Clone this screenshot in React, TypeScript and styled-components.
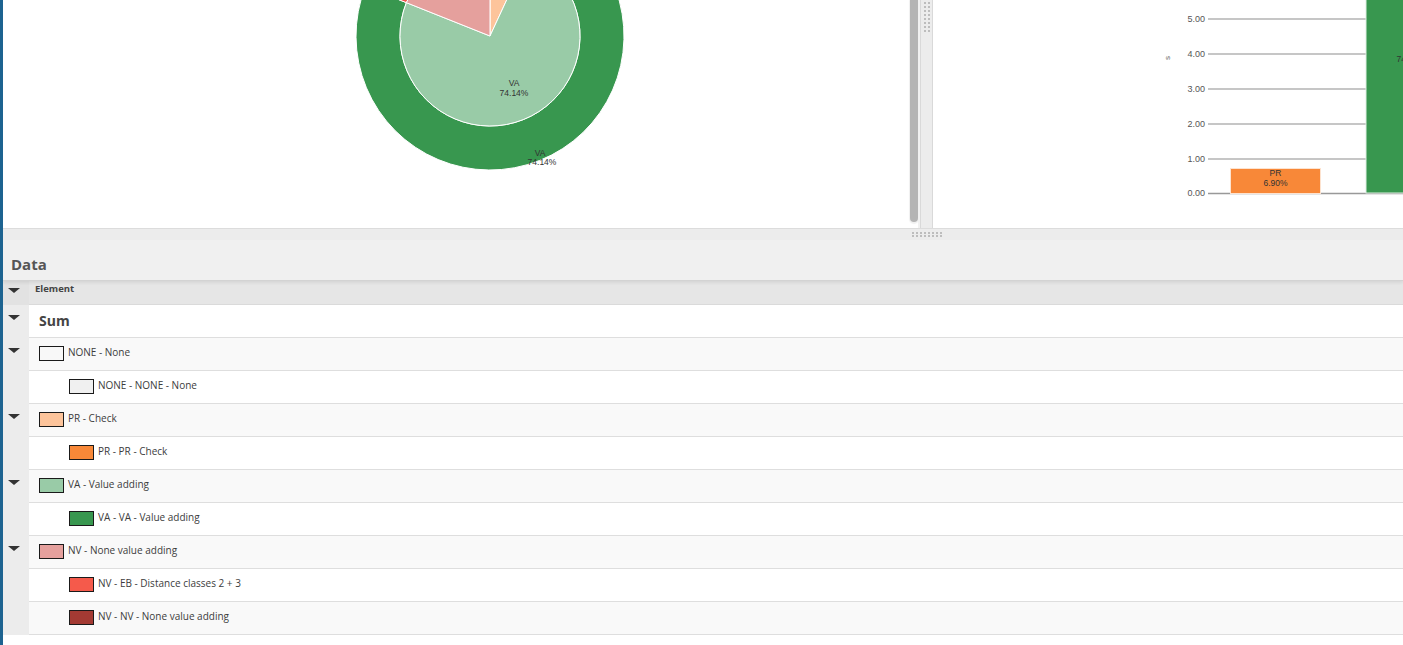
import React from 'react';
import styled, { createGlobalStyle } from 'styled-components';

const GlobalStyle = createGlobalStyle`
  html, body { margin: 0; padding: 0; background: #fff; }
  body { font-family: "Open Sans", "Noto Sans", sans-serif; overflow: hidden; }
  #root { width: 1403px; height: 645px; }
`;

const Page = styled.div`
  width: 1403px;
  height: 645px;
  box-sizing: border-box;
  border-left: 3px solid #1d6390;
  display: flex;
  flex-direction: column;
  overflow: hidden;
  background: #fff;
`;

const TopArea = styled.div`
  height: 229px;
  flex: none;
  display: flex;
  box-sizing: border-box;
  border-bottom: 1px solid #dcdcdc;
`;

const ChartPanel = styled.div<{ $width: number }>`
  width: ${p => p.$width}px;
  flex: none;
  overflow: hidden;
  background: #fff;
  svg { display: block; }
`;

const ScrollTrack = styled.div`
  width: 10px;
  flex: none;
  box-sizing: content-box;
  border-right: 2px solid #f1f1f1;
  padding-bottom: 6px;
  display: flex;
  background: #fff;
`;

const ScrollThumb = styled.div`
  margin-left: 2px;
  width: 8px;
  background: #b4b4b4;
  border-radius: 0 0 4px 4px;
  box-shadow: 0 1px 1px 1px #f0f0f0;
`;

const VSplitter = styled.div`
  width: 11px;
  flex: none;
  background: #ececec;
  border-left: 1px solid #d9d9d9;
  border-right: 1px solid #d9d9d9;
  display: flex;
  justify-content: center;
  padding-top: 2px;
  box-sizing: content-box;
`;

const Grip = styled.div<{ $cols: number; $rows: number; $rowGap: number }>`
  display: grid;
  grid-template-columns: repeat(${p => p.$cols}, 2px);
  grid-template-rows: repeat(${p => p.$rows}, 2px);
  column-gap: 2px;
  row-gap: ${p => p.$rowGap}px;
  span { background: #bdbdbd; }
`;

const HSplitter = styled.div`
  height: 11px;
  flex: none;
  background: #ececec;
  display: flex;
  align-items: center;
  padding-left: 909px;
`;

const SectionHeader = styled.div`
  height: 41px;
  flex: none;
  box-sizing: border-box;
  background: #f0f0f0;
  border-bottom: 1px solid #d3d3d3;
  box-shadow: 0 2px 3px rgba(0, 0, 0, 0.07);
  display: flex;
  align-items: center;
  padding: 8px 0 0 8px;
  position: relative;
  z-index: 1;
`;

const SectionTitle = styled.span`
  font-size: 15px;
  font-weight: 700;
  color: #555;
`;

const Table = styled.div`
  display: flex;
  flex-direction: column;
`;

const HeaderRow = styled.div`
  display: flex;
  height: 24px;
`;

const HeaderToggle = styled.div`
  width: 26px;
  flex: none;
  background: #e2e2e2;
  box-sizing: border-box;
  padding: 7px 0 0 5px;
`;

const HeaderCell = styled.div`
  flex: 1;
  background: #e6e6e6;
  border-bottom: 1px solid #dadada;
  padding: 1px 0 0 6px;
  font-size: 9.5px;
  font-weight: 700;
  color: #444;
`;

const Row = styled.div`
  display: flex;
  height: 33px;
`;

const ToggleCell = styled.div`
  width: 26px;
  flex: none;
  background: #ececec;
  box-sizing: border-box;
  padding: 10px 0 0 5px;
`;

const Caret = styled.div`
  width: 0;
  height: 0;
  border-left: 6px solid transparent;
  border-right: 6px solid transparent;
  border-top: 5px solid #333;
`;

const ContentCell = styled.div<{ $level: number; $striped: boolean }>`
  flex: 1;
  display: flex;
  align-items: center;
  box-sizing: border-box;
  border-bottom: 1px solid #dedede;
  background: ${p => (p.$striped ? '#f9f9f9' : '#fff')};
  padding-left: ${p => (p.$level === 2 ? 40 : 10)}px;
  padding-bottom: ${p => (p.$level === 0 ? 1 : 2)}px;
`;

const Swatch = styled.span<{ $color: string }>`
  width: 25px;
  height: 15px;
  flex: none;
  box-sizing: border-box;
  border: 1px solid #1a1a1a;
  background: ${p => p.$color};
  margin-right: 4px;
`;

const Label = styled.span`
  font-size: 10px;
  color: #3c3c3c;
  white-space: nowrap;
  margin-top: -2px;
`;

const SumLabel = styled.span`
  font-size: 14px;
  font-weight: 700;
  color: #444;
`;

type RowData = { level: 0 | 1 | 2; label: string; color?: string; expandable?: boolean };

const rows: RowData[] = [
  { level: 0, label: 'Sum', expandable: true },
  { level: 1, label: 'NONE - None', color: '#f8f8f8', expandable: true },
  { level: 2, label: 'NONE - NONE - None', color: '#f0f0f0' },
  { level: 1, label: 'PR - Check', color: '#fdc49b', expandable: true },
  { level: 2, label: 'PR - PR - Check', color: '#f88838' },
  { level: 1, label: 'VA - Value adding', color: '#99cba7', expandable: true },
  { level: 2, label: 'VA - VA - Value adding', color: '#38974f' },
  { level: 1, label: 'NV - None value adding', color: '#e5a09d', expandable: true },
  { level: 2, label: 'NV - EB - Distance classes 2 + 3', color: '#f55a4b' },
  { level: 2, label: 'NV - NV - None value adding', color: '#a33a33' },
];

const CX = 487;
const CY = 36;
const R_IN = 90;
const R_OUT = 134;

const pt = (r: number, deg: number) => {
  const a = ((deg - 90) * Math.PI) / 180;
  return `${(CX + r * Math.cos(a)).toFixed(2)} ${(CY + r * Math.sin(a)).toFixed(2)}`;
};

const wedge = (r: number, a0: number, a1: number) => {
  const large = a1 - a0 > 180 ? 1 : 0;
  return `M ${CX} ${CY} L ${pt(r, a0)} A ${r} ${r} 0 ${large} 1 ${pt(r, a1)} Z`;
};

const ring = (r0: number, r1: number, a0: number, a1: number) => {
  const large = a1 - a0 > 180 ? 1 : 0;
  return `M ${pt(r1, a0)} A ${r1} ${r1} 0 ${large} 1 ${pt(r1, a1)} L ${pt(r0, a1)} A ${r0} ${r0} 0 ${large} 0 ${pt(r0, a0)} Z`;
};

const PR_END = 24.84;
const VA_END = 291.74;

const PieChart = () => (
  <svg width={905} height={228} viewBox="0 0 905 228">
    <g stroke="#fff" strokeWidth={1}>
      <path d={ring(R_IN, R_OUT, 0, PR_END)} fill="#f88838" />
      <path d={ring(R_IN, R_OUT, PR_END, VA_END)} fill="#38974f" />
      <path d={ring(R_IN, R_OUT, VA_END, 330)} fill="#f2554a" />
      <path d={ring(R_IN, R_OUT, 330, 360)} fill="#a33a33" />
      <path d={wedge(R_IN, 0, PR_END)} fill="#fdc49b" />
      <path d={wedge(R_IN, PR_END, VA_END)} fill="#99cba7" />
      <path d={wedge(R_IN, VA_END, 360)} fill="#e5a09d" />
    </g>
    <g fontFamily='"Liberation Sans", Arial, sans-serif' fontSize={8.5} fill="#333" textAnchor="middle">
      <text x={511} y={86}>VA</text>
      <text x={511} y={96}>74.14%</text>
      <text x={537} y={156}>VA</text>
      <text x={539} y={165}>74.14%</text>
    </g>
  </svg>
);

const ticks = ['5.00', '4.00', '3.00', '2.00', '1.00'];

const BarChart = () => (
  <svg width={470} height={228} viewBox="0 0 470 228">
    <g fontFamily='"Liberation Sans", Arial, sans-serif' fontSize={9} fill="#555" textAnchor="end">
      {ticks.map((t, i) => (
        <text key={t} x={272} y={22 + i * 35}>{t}</text>
      ))}
      <text x={272} y={196}>0.00</text>
    </g>
    <g stroke="#b3b3b3" strokeWidth={1.6}>
      {ticks.map((t, i) => (
        <line key={t} x1={275} x2={470} y1={19 + i * 35} y2={19 + i * 35} />
      ))}
    </g>
    <line x1={275} x2={470} y1={193.5} y2={193.5} stroke="#999" strokeWidth={1.6} />
    <text
      x={237}
      y={58}
      fontFamily='"Liberation Sans", Arial, sans-serif'
      fontSize={8}
      fill="#666"
      textAnchor="middle"
      transform="rotate(-90 237 58)"
    >
      s
    </text>
    <rect x={297.5} y={168.5} width={90} height={25} fill="#f88838" stroke="#fde3d0" strokeWidth={1} />
    <rect x={433} y={-70} width={92} height={263} fill="#38974f" stroke="#e0efe4" strokeWidth={1} />
    <g fontFamily='"Liberation Sans", Arial, sans-serif' fontSize={8.5} fill="#333" textAnchor="middle">
      <text x={342.5} y={176}>PR</text>
      <text x={342.5} y={185.5}>6.90%</text>
      <text x={478} y={52}>VA</text>
      <text x={478} y={62}>74.14%</text>
    </g>
  </svg>
);

const dots = (n: number) => Array.from({ length: n }, (_, i) => <span key={i} />);

export default function App() {
  return (
    <>
      <GlobalStyle />
      <Page>
        <TopArea>
          <ChartPanel $width={905}>
            <PieChart />
          </ChartPanel>
          <ScrollTrack>
            <ScrollThumb />
          </ScrollTrack>
          <VSplitter>
            <Grip $cols={2} $rows={8} $rowGap={2}>{dots(16)}</Grip>
          </VSplitter>
          <ChartPanel $width={470}>
            <BarChart />
          </ChartPanel>
        </TopArea>
        <HSplitter>
          <Grip $cols={8} $rows={2} $rowGap={1}>{dots(16)}</Grip>
        </HSplitter>
        <SectionHeader>
          <SectionTitle>Data</SectionTitle>
        </SectionHeader>
        <Table>
          <HeaderRow>
            <HeaderToggle>
              <Caret />
            </HeaderToggle>
            <HeaderCell>Element</HeaderCell>
          </HeaderRow>
          {rows.map((r, i) => (
            <Row key={r.label}>
              <ToggleCell>{r.expandable && <Caret />}</ToggleCell>
              <ContentCell $level={r.level} $striped={i % 2 === 1}>
                {r.level === 0 ? (
                  <SumLabel>{r.label}</SumLabel>
                ) : (
                  <>
                    <Swatch $color={r.color || '#fff'} />
                    <Label>{r.label}</Label>
                  </>
                )}
              </ContentCell>
            </Row>
          ))}
        </Table>
      </Page>
    </>
  );
}
